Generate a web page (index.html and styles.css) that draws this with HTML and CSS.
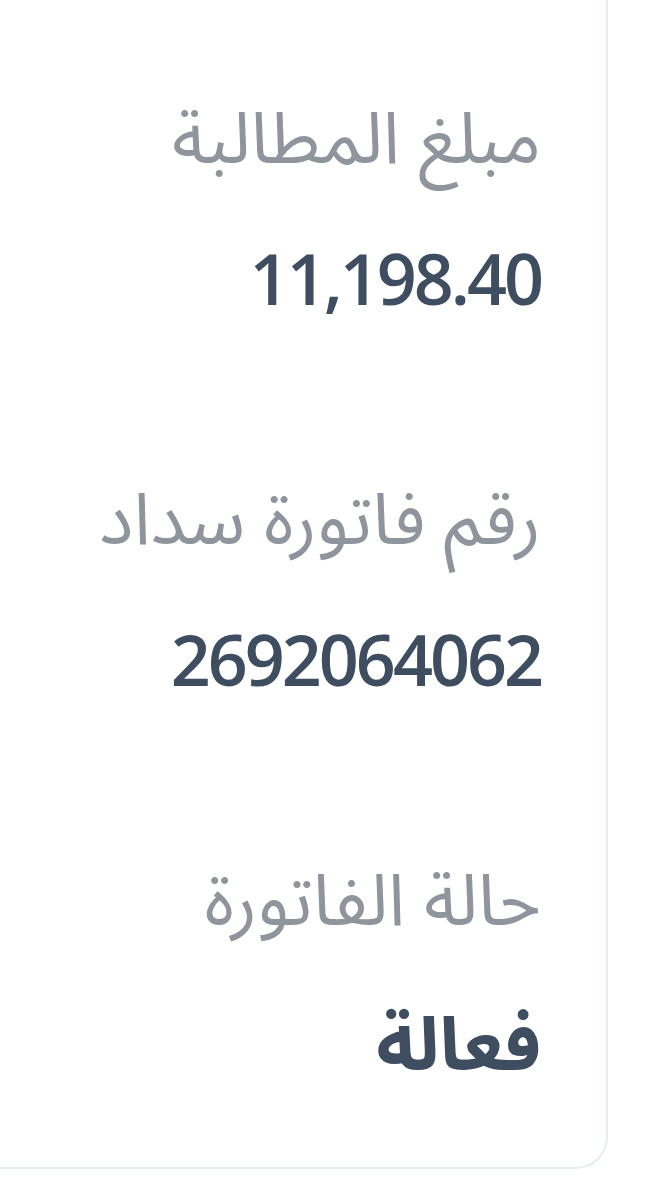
FILE: index.html
```html
<!DOCTYPE html>
<html lang="ar" dir="rtl">
<head>
<meta charset="utf-8">
<link rel="stylesheet" href="styles.css">
</head>
<body>
<div class="page">
  <section class="card">
    <div class="field">
      <div class="label">مبلغ المطالبة</div>
      <div class="value">11,198.40</div>
    </div>
    <div class="field">
      <div class="label">رقم فاتورة سداد</div>
      <div class="value">2692064062</div>
    </div>
    <div class="field">
      <div class="label">حالة الفاتورة</div>
      <div class="value value-ar">فعالة</div>
    </div>
  </section>
</div>
</body>
</html>
```
FILE: styles.css
```css
html, body {
  margin: 0;
  padding: 0;
  background: #ffffff;
}
.page {
  width: 661px;
  height: 1200px;
  overflow: hidden;
  direction: rtl;
}
.card {
  margin-right: 53px;
  height: 1169px;
  box-sizing: border-box;
  border-right: 2px solid #e4eeec;
  border-bottom: 2px solid #e4eeec;
  border-bottom-right-radius: 32px;
  padding-right: 65px;
  padding-top: 95px;
}
.field {
  margin-bottom: 158px;
}
.label {
  font-family: "Noto Sans Arabic", "DejaVu Sans", sans-serif;
  font-size: 72px;
  line-height: 90px;
  color: #8e959d;
}
.value {
  font-family: "Open Sans", "Noto Sans", sans-serif;
  font-weight: 600;
  font-size: 70px;
  letter-spacing: -3px;
  line-height: 80px;
  margin-top: 53px;
  color: #3f4d60;
  direction: ltr;
  text-align: right;
}
.value-ar {
  font-family: "Noto Sans Arabic", "DejaVu Sans", sans-serif;
  font-weight: 700;
  font-size: 74px;
  letter-spacing: 0;
  margin-top: 60px;
  direction: rtl;
}
```
